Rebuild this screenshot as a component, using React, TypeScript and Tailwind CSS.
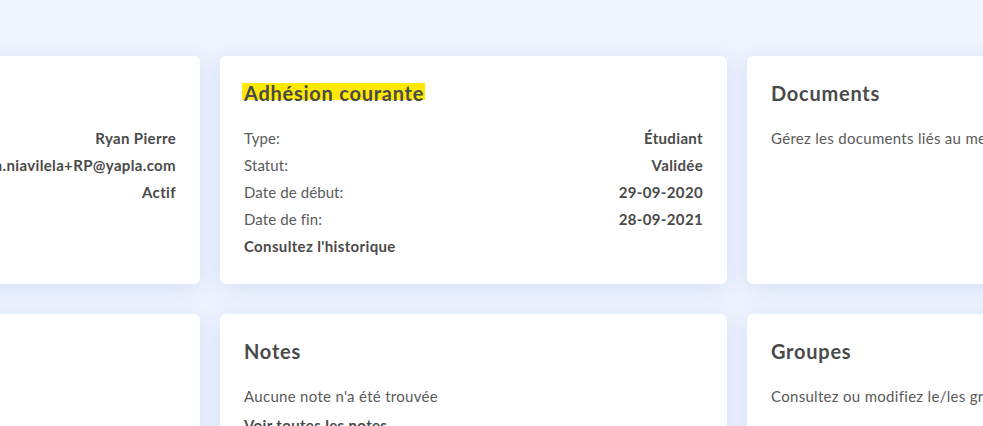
import React from "react";

const font = { fontFamily: "Lato, 'Noto Sans', sans-serif" };

function Card({ title, highlight, children }: { title: string; highlight?: boolean; children: React.ReactNode }) {
  return (
    <div className="w-[507px] shrink-0 h-[228px] rounded-md bg-white px-6 pt-[25px] shadow-[0_4px_22px_rgba(175,198,245,0.45)]">
      <h2 className="text-[20px] leading-[24px] font-bold tracking-[0.75px] text-[#4a4a4a] mb-[20px] whitespace-nowrap">
        {highlight ? (
          <span className="-ml-[2px] pl-[2px] pr-[1px] bg-[linear-gradient(transparent_2px,#ffe900_2px,#ffe900_19px,transparent_19px)]">{title}</span>
        ) : (
          title
        )}
      </h2>
      {children}
    </div>
  );
}

function Row({ label, value }: { label: string; value: string }) {
  return (
    <div className="flex justify-between text-[15px] leading-[27px] whitespace-nowrap">
      <span className="text-[#5a5a5a] tracking-[0.1px]">{label}</span>
      <span className="font-bold tracking-[0.35px] text-[#4a4a4a]">{value}</span>
    </div>
  );
}

function Text({ children, bold }: { children: React.ReactNode; bold?: boolean }) {
  return (
    <div
      className={`text-[15px] leading-[27px] whitespace-nowrap ${
        bold ? "font-bold tracking-[0.35px] text-[#4a4a4a]" : "tracking-[0.3px] text-[#5a5a5a]"
      }`}
    >
      {children}
    </div>
  );
}

export default function App() {
  return (
    <div className="w-[983px] h-[426px] overflow-hidden bg-[#f0f4fd]" style={font}>
      <div className="ml-[-307px] pt-[56px] flex flex-col gap-[30px]">
        <div className="flex gap-5">
          <Card title="Profil">
            <Row label="Nom:" value="Ryan Pierre" />
            <Row label="Courriel:" value="vaniavilela.niavilela+RP@yapla.com" />
            <Row label="Statut:" value="Actif" />
          </Card>
          <Card title="Adhésion courante" highlight>
            <Row label="Type:" value="Étudiant" />
            <Row label="Statut:" value="Validée" />
            <Row label="Date de début:" value="29-09-2020" />
            <Row label="Date de fin:" value="28-09-2021" />
            <Text bold>Consultez l'historique</Text>
          </Card>
          <Card title="Documents">
            <Text>Gérez les documents liés au membre</Text>
          </Card>
        </div>
        <div className="flex gap-5">
          <Card title="Activités">
            <Text>Consultez les activités et clientèles</Text>
          </Card>
          <Card title="Notes">
            <Text>Aucune note n'a été trouvée</Text>
            <div className="h-[2px]" />
            <Text bold>Voir toutes les notes</Text>
          </Card>
          <Card title="Groupes">
            <Text>Consultez ou modifiez le/les groupes du membre</Text>
          </Card>
        </div>
      </div>
    </div>
  );
}
